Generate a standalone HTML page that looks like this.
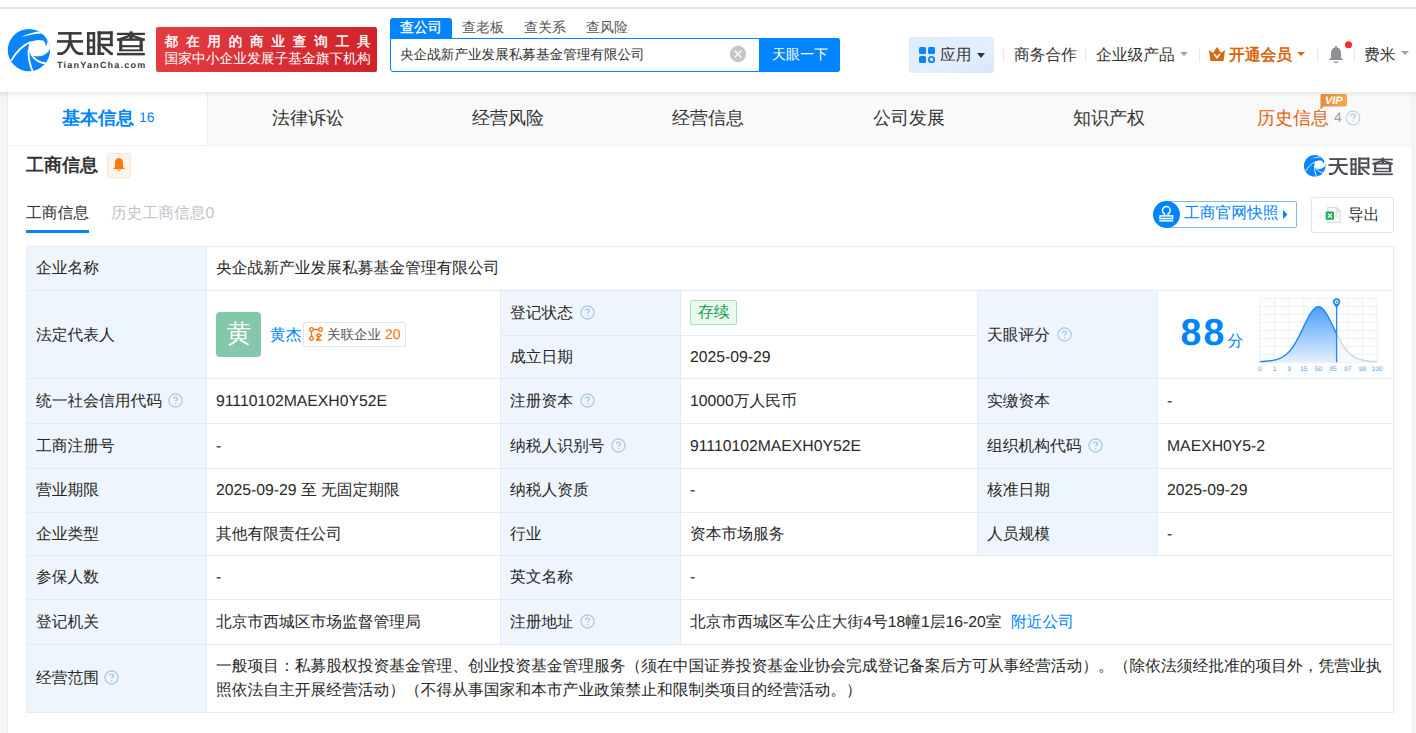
<!DOCTYPE html>
<html><head><meta charset="utf-8">
<style>
*{box-sizing:border-box;margin:0;padding:0}
html,body{width:1416px;height:733px;overflow:hidden;background:#f5f5f5;font-family:"Liberation Sans",sans-serif;color:#333;text-rendering:geometricPrecision}
.a{position:absolute;white-space:nowrap}
#hdr{position:absolute;left:0;top:0;width:1416px;height:92px;background:#fff}
#topline{position:absolute;left:0;top:7px;width:1416px;height:2px;background:#e2e2e2}
#hshadow{position:absolute;left:0;top:92px;width:1416px;height:6px;background:linear-gradient(rgba(0,0,0,0.07),rgba(0,0,0,0))}
#panel{position:absolute;left:7px;top:92px;width:1406px;height:700px;background:#fff;border-left:1px solid #ebebeb;border-right:1px solid #efefef}
.tb{top:92px;width:1px;height:53px;background:#efefef}
.c{font-size:15.75px;color:#282828;line-height:19px}
.tt{top:107px;font-size:18px;color:#333;line-height:22px}
</style></head>
<body>
<div id="hdr">
  <div id="topline"></div>
  <!-- logo circle -->
  <svg class="a" style="left:6px;top:27px" width="46" height="46" viewBox="0 0 733 733">
    <defs><clipPath id="lc"><circle cx="365" cy="368" r="337"/></clipPath></defs>
    <g clip-path="url(#lc)">
      <rect x="0" y="0" width="733" height="733" fill="#0a84ff"/>
      <path d="M380,245 C430,212 520,195 590,215 C625,240 635,280 630,312 C650,290 665,245 660,210 C650,160 610,125 552,100 L552,0 L760,0 L760,345 L700,345 C680,400 620,455 520,468 C480,470 445,465 420,455 C372,425 355,380 358,330 C360,295 368,265 380,245 Z" fill="#fff"/>
      <path d="M250,160 C320,138 430,110 560,102 L565,60 C430,85 320,118 250,154 Z" fill="#fff"/>
      <path d="M80,540 C150,420 260,290 398,238" stroke="#fff" stroke-width="29" fill="none"/>
      <path d="M362,360 C350,480 378,600 430,720" stroke="#fff" stroke-width="29" fill="none"/>
      <path d="M402,440 C460,530 540,575 640,582" stroke="#fff" stroke-width="29" fill="none"/>
    </g>
  </svg>
  <!-- logo text -->
  <svg class="a" style="left:52px;top:25px" width="100" height="50" viewBox="0 0 1416 708">
    <g fill="#3d3a3b">
      <!-- 天 -->
      <rect x="85" y="100" width="335" height="36"/>
      <rect x="70" y="214" width="370" height="37"/>
      <rect x="236" y="100" width="40" height="150"/>
      <path d="M250,245 C238,320 195,390 140,405 L75,405" stroke="#3d3a3b" stroke-width="40" fill="none"/>
      <path d="M262,245 C285,320 325,390 380,405 L440,405" stroke="#3d3a3b" stroke-width="40" fill="none"/>
      <!-- 眼 left -->
      <rect x="495" y="100" width="38" height="325"/>
      <rect x="575" y="100" width="36" height="325"/>
      <rect x="495" y="100" width="116" height="35"/>
      <rect x="495" y="203" width="116" height="32"/>
      <rect x="495" y="302" width="116" height="30"/>
      <rect x="495" y="390" width="116" height="35"/>
      <!-- 眼 right -->
      <rect x="645" y="90" width="45" height="335"/>
      <rect x="645" y="90" width="215" height="40"/>
      <rect x="820" y="90" width="40" height="210"/>
      <rect x="690" y="180" width="130" height="35"/>
      <rect x="645" y="265" width="215" height="35"/>
      <rect x="645" y="388" width="95" height="37"/>
      <path d="M715,300 L835,405 L862,408" stroke="#3d3a3b" stroke-width="38" fill="none"/>
      <!-- 查 -->
      <rect x="920" y="110" width="395" height="32"/>
      <rect x="1097" y="90" width="46" height="110"/>
      <path d="M1105,150 L935,212" stroke="#3d3a3b" stroke-width="34" fill="none"/>
      <path d="M1135,150 L1300,212" stroke="#3d3a3b" stroke-width="34" fill="none"/>
      <rect x="920" y="190" width="395" height="34"/>
      <rect x="952" y="215" width="43" height="155"/>
      <rect x="1240" y="215" width="45" height="155"/>
      <rect x="952" y="285" width="333" height="30"/>
      <rect x="952" y="345" width="333" height="27"/>
      <rect x="920" y="395" width="395" height="35"/>
    </g>
  </svg>
  <div class="a" style="left:57px;top:59.5px;font-size:9px;font-weight:bold;letter-spacing:1.22px;color:#3d3a3b;line-height:11px">TianYanCha.com</div>
  <!-- red banner -->
  <div class="a" style="left:156px;top:27px;width:221px;height:45px;border-radius:2px;background:linear-gradient(100deg,#e33d42,#d0222a)"></div>
  <div class="a" style="left:164.5px;top:33.5px;font-size:13.6px;color:#fff;letter-spacing:7.8px;-webkit-text-stroke:0.4px #fff;line-height:16px">都在用的商业查询工具</div>
  <div class="a" style="left:164.5px;top:51px;font-size:13.75px;color:#fff;line-height:16px">国家中小企业发展子基金旗下机构</div>
  <!-- search -->
  <div class="a" style="left:390px;top:18px;width:62px;height:21px;background:#0084ff;border-radius:3px 3px 0 0"></div>
  <div class="a" style="left:400px;top:19px;font-size:14px;color:#fff;line-height:17px;-webkit-text-stroke:0.3px #fff">查公司</div>
  <div class="a" style="left:462px;top:19px;font-size:14px;color:#555;line-height:17px">查老板</div>
  <div class="a" style="left:524px;top:19px;font-size:14px;color:#555;line-height:17px">查关系</div>
  <div class="a" style="left:586px;top:19px;font-size:14px;color:#555;line-height:17px">查风险</div>
  <div class="a" style="left:390px;top:38px;width:450px;height:34px;border:1px solid #0084ff;border-radius:0 3px 3px 3px;background:#fff"></div>
  <div class="a" style="left:400px;top:47px;font-size:13.6px;color:#333;line-height:16px">央企战新产业发展私募基金管理有限公司</div>
  <svg class="a" style="left:729px;top:45px" width="18" height="18" viewBox="0 0 18 18"><circle cx="9" cy="9" r="8.2" fill="#c4c6cc"/><path d="M5.8,5.8 L12.2,12.2 M12.2,5.8 L5.8,12.2" stroke="#fff" stroke-width="1.3"/></svg>
  <div class="a" style="left:759px;top:38px;width:81px;height:34px;background:#0084ff;border-radius:0 3px 3px 0"></div>
  <div class="a" style="left:772px;top:46px;font-size:14px;color:#fff;line-height:17px">天眼一下</div>
  <!-- right nav -->
  <div class="a" style="left:909px;top:37px;width:85px;height:36px;border-radius:3px;background:linear-gradient(160deg,#dcecfd,#e3effc 60%,#d6e6fa)"></div>
  <svg class="a" style="left:919px;top:47px" width="17" height="16" viewBox="0 0 17 16">
    <rect x="0" y="0" width="7" height="7" rx="1.5" fill="#0a84ff"/>
    <rect x="9" y="0" width="7" height="7" rx="1.5" fill="#0a84ff"/>
    <rect x="0" y="9" width="7" height="7" rx="1.5" fill="#0a84ff"/>
    <circle cx="12.5" cy="12.5" r="2.7" fill="none" stroke="#0a84ff" stroke-width="1.8"/>
  </svg>
  <div class="a" style="left:940px;top:46px;font-size:15.75px;color:#333;line-height:19px">应用</div>
  <svg class="a" style="left:977px;top:53px" width="8" height="5" viewBox="0 0 8 5"><path d="M0,0 L8,0 L4,5Z" fill="#333"/></svg>
  <div class="a" style="left:1003px;top:48px;width:1px;height:14px;background:#e6e9ee"></div>
  <div class="a" style="left:1014px;top:46px;font-size:15.75px;color:#333;line-height:19px">商务合作</div>
  <div class="a" style="left:1085px;top:48px;width:1px;height:14px;background:#e6e9ee"></div>
  <div class="a" style="left:1096px;top:46px;font-size:15.75px;color:#333;line-height:19px">企业级产品</div>
  <svg class="a" style="left:1180px;top:52px" width="8" height="4" viewBox="0 0 8 4"><path d="M0,0 L8,0 L4,4Z" fill="#a0a0a0"/></svg>
  <div class="a" style="left:1199px;top:48px;width:1px;height:14px;background:#e6e9ee"></div>
  <svg class="a" style="left:1209px;top:47px" width="16" height="14" viewBox="0 0 16 14">
    <path d="M0,3 L4,6 L8,0 L12,6 L16,3 L14.5,14 L1.5,14 Z" fill="#d9650c"/>
    <path d="M5,7 L8,10.5 L11,7" stroke="#fff" stroke-width="1.8" fill="none"/>
  </svg>
  <div class="a" style="left:1229px;top:46px;font-size:15.75px;font-weight:bold;color:#d9650c;line-height:19px">开通会员</div>
  <svg class="a" style="left:1297px;top:52px" width="8" height="4" viewBox="0 0 8 4"><path d="M0,0 L8,0 L4,4Z" fill="#d9650c"/></svg>
  <div class="a" style="left:1317px;top:48px;width:1px;height:14px;background:#e6e9ee"></div>
  <svg class="a" style="left:1328px;top:45px" width="16" height="19" viewBox="0 0 16 19">
    <rect x="7.3" y="0.8" width="1.4" height="2" fill="#8c8f95"/>
    <path d="M3,14 L3,8.5 C3,4.8 5,2.3 8,2.3 C11,2.3 13,4.8 13,8.5 L13,14 Z" fill="#8c8f95"/>
    <rect x="1.2" y="13.3" width="13.6" height="1.7" rx="0.8" fill="#8c8f95"/>
    <rect x="5.8" y="16.6" width="4.4" height="1.3" fill="#8c8f95"/>
  </svg>
  <svg class="a" style="left:1344px;top:41px" width="8" height="8" viewBox="0 0 8 8"><circle cx="4.5" cy="3.7" r="3.5" fill="#f72a2a"/></svg>
  <div class="a" style="left:1354px;top:48px;width:1px;height:14px;background:#e6e9ee"></div>
  <div class="a" style="left:1364px;top:46px;font-size:15.75px;color:#333;line-height:19px">费米</div>
  <svg class="a" style="left:1401px;top:51px" width="8" height="4" viewBox="0 0 8 4"><path d="M0,0 L8,0 L4,4Z" fill="#a0a0a0"/></svg>
</div>
<div id="panel"></div>
<!-- tab bar -->
<div class="a" style="left:8px;top:92px;width:1404px;height:53px;background:#f9f9f9"></div>
<div class="a" style="left:8px;top:92px;width:199px;height:53px;background:#fff"></div>
<div class="a tb" style="left:207px"></div>
<div class="a" style="left:8px;top:145px;width:1404px;height:1px;background:#f2f2f2"></div>
<div class="a" style="left:62px;top:107px;font-size:18px;font-weight:bold;color:#0084ff;line-height:22px">基本信息</div>
<div class="a" style="left:139px;top:108px;font-size:14px;color:#0084ff;line-height:18px">16</div>
<div class="a tt" style="left:272px">法律诉讼</div>
<div class="a tt" style="left:472px">经营风险</div>
<div class="a tt" style="left:672px">经营信息</div>
<div class="a tt" style="left:873px">公司发展</div>
<div class="a tt" style="left:1073px">知识产权</div>
<div class="a tt" style="left:1257px;color:#de630d">历史信息</div>
<div class="a" style="left:1334px;top:108px;font-size:14px;color:#999;line-height:18px">4</div>
<svg class="a" style="left:1345px;top:110px" width="16" height="16" viewBox="0 0 16 16"><circle cx="8" cy="8" r="6.8" fill="none" stroke="#c5d1de" stroke-width="1.2"/><path d="M5.9,6.2 C5.9,4.9 6.9,4.2 8,4.2 C9.2,4.2 10.1,5 10.1,6.1 C10.1,7.4 8.2,7.6 8.2,9.1" fill="none" stroke="#b8c4d2" stroke-width="1.2"/><circle cx="8.2" cy="11.3" r="0.8" fill="#b8c4d2"/></svg>
<svg class="a" style="left:1320px;top:93px" width="28" height="17" viewBox="0 0 28 17">
  <defs><linearGradient id="vg" x1="0" x2="1"><stop offset="0" stop-color="#e68a34"/><stop offset="1" stop-color="#f2ab4e"/></linearGradient></defs>
  <path d="M2,1 L25,1 Q27,1 27,3 L27,11.5 Q27,13.5 25,13.5 L4,13.5 L0.5,16.5 L0.5,3 Q0.5,1 2,1Z" fill="url(#vg)"/>
  <text x="13.8" y="11.2" font-family="Liberation Sans" font-weight="bold" font-style="italic" font-size="11" fill="#fff" text-anchor="middle">VIP</text>
</svg>

<!-- section title -->
<div class="a" style="left:26px;top:154px;font-size:18px;font-weight:bold;color:#333;line-height:22px">工商信息</div>
<div class="a" style="left:107px;top:153px;width:24px;height:25px;border:1px solid #fde4d2;background:#fff4ec;border-radius:3px"></div>
<svg class="a" style="left:112px;top:157px" width="14" height="15" viewBox="0 0 14 15">
  <path d="M7,1 C4.2,1 3,3.2 3,6 L3,10 L1,12 L13,12 L11,10 L11,6 C11,3.2 9.8,1 7,1Z" fill="#ff7a00"/>
  <path d="M5,12.5 C5.3,14 8.7,14 9,12.5Z" fill="#ff7a00"/>
</svg>
<svg class="a" style="left:1303px;top:154px" width="23.5" height="23.5" viewBox="0 0 733 733">
    <defs><clipPath id="lc2"><circle cx="365" cy="368" r="337"/></clipPath></defs>
    <g clip-path="url(#lc2)">
      <rect x="0" y="0" width="733" height="733" fill="#0a84ff"/>
      <path d="M380,245 C430,212 520,195 590,215 C625,240 635,280 630,312 C650,290 665,245 660,210 C650,160 610,125 552,100 L552,0 L760,0 L760,345 L700,345 C680,400 620,455 520,468 C480,470 445,465 420,455 C372,425 355,380 358,330 C360,295 368,265 380,245 Z" fill="#fff"/>
      <path d="M250,160 C320,138 430,110 560,102 L565,60 C430,85 320,118 250,154 Z" fill="#fff"/>
      <path d="M80,540 C150,420 260,290 398,238" stroke="#fff" stroke-width="29" fill="none"/>
      <path d="M362,360 C350,480 378,600 430,720" stroke="#fff" stroke-width="29" fill="none"/>
      <path d="M402,440 C460,530 540,575 640,582" stroke="#fff" stroke-width="29" fill="none"/>
    </g>
  </svg>
<svg class="a" style="left:1325px;top:152.5px" width="73" height="36.5" viewBox="0 0 1416 708">
    <g fill="#4a4d55">
      <!-- 天 -->
      <rect x="85" y="100" width="335" height="36"/>
      <rect x="70" y="214" width="370" height="37"/>
      <rect x="236" y="100" width="40" height="150"/>
      <path d="M250,245 C238,320 195,390 140,405 L75,405" stroke="#4a4d55" stroke-width="40" fill="none"/>
      <path d="M262,245 C285,320 325,390 380,405 L440,405" stroke="#4a4d55" stroke-width="40" fill="none"/>
      <!-- 眼 left -->
      <rect x="495" y="100" width="38" height="325"/>
      <rect x="575" y="100" width="36" height="325"/>
      <rect x="495" y="100" width="116" height="35"/>
      <rect x="495" y="203" width="116" height="32"/>
      <rect x="495" y="302" width="116" height="30"/>
      <rect x="495" y="390" width="116" height="35"/>
      <!-- 眼 right -->
      <rect x="645" y="90" width="45" height="335"/>
      <rect x="645" y="90" width="215" height="40"/>
      <rect x="820" y="90" width="40" height="210"/>
      <rect x="690" y="180" width="130" height="35"/>
      <rect x="645" y="265" width="215" height="35"/>
      <rect x="645" y="388" width="95" height="37"/>
      <path d="M715,300 L835,405 L862,408" stroke="#4a4d55" stroke-width="38" fill="none"/>
      <!-- 查 -->
      <rect x="920" y="110" width="395" height="32"/>
      <rect x="1097" y="90" width="46" height="110"/>
      <path d="M1105,150 L935,212" stroke="#4a4d55" stroke-width="34" fill="none"/>
      <path d="M1135,150 L1300,212" stroke="#4a4d55" stroke-width="34" fill="none"/>
      <rect x="920" y="190" width="395" height="34"/>
      <rect x="952" y="215" width="43" height="155"/>
      <rect x="1240" y="215" width="45" height="155"/>
      <rect x="952" y="285" width="333" height="30"/>
      <rect x="952" y="345" width="333" height="27"/>
      <rect x="920" y="395" width="395" height="35"/>
    </g>
  </svg>

<!-- subtabs -->
<div class="a" style="left:26px;top:204px;font-size:15.75px;color:#333;line-height:19px">工商信息</div>
<div class="a" style="left:26px;top:230px;width:63px;height:3px;background:#0084ff"></div>
<div class="a" style="left:111px;top:204px;font-size:15.75px;color:#c0c4cc;line-height:19px">历史工商信息0</div>

<!-- buttons -->
<div class="a" style="left:1166px;top:201px;width:131px;height:27px;border:1px solid #7db9f7;border-radius:2px;background:#fff"></div>
<svg class="a" style="left:1153px;top:201px" width="27" height="27" viewBox="0 0 27 27">
  <circle cx="13.5" cy="13.5" r="13.5" fill="#0084ff"/>
  <path d="M11.6,14.6 L11.6,13 C10.1,12.3 9.4,11 9.4,9.6 C9.4,7.3 11.2,5.6 13.3,5.6 C15.4,5.6 17.2,7.3 17.2,9.6 C17.2,11 16.5,12.3 15,13 L15,14.6" fill="none" stroke="#fff" stroke-width="1.5"/>
  <rect x="7" y="14.9" width="12.6" height="2.6" fill="none" stroke="#fff" stroke-width="1.5"/>
  <rect x="6.3" y="18.8" width="13.9" height="1.9" fill="#dcecff"/>
</svg>
<div class="a" style="left:1184px;top:204px;font-size:15.75px;color:#0084ff;line-height:19px">工商官网快照</div>
<svg class="a" style="left:1283px;top:210px" width="5" height="9" viewBox="0 0 5 9"><path d="M0,0 L4.5,4.5 L0,9Z" fill="#0084ff"/></svg>

<div class="a" style="left:1311px;top:197px;width:83px;height:36px;border:1px solid #dfe3ea;border-radius:3px;background:#fff"></div>
<svg class="a" style="left:1325px;top:206px" width="16" height="18" viewBox="0 0 16 18">
  <path d="M2.8,1.5 L11.2,1.5 L15.2,5.5 L15.2,16.2 L2.8,16.2 Z" fill="#fff" stroke="#d3d6dc" stroke-width="1.1"/>
  <path d="M11.2,1.5 L11.2,5.5 L15.2,5.5" fill="none" stroke="#d3d6dc" stroke-width="1.1"/>
  <rect x="10.3" y="6.6" width="3" height="0.9" fill="#d0d3d9"/><rect x="10.3" y="8.6" width="3" height="0.9" fill="#d0d3d9"/><rect x="10.3" y="10.4" width="3" height="0.9" fill="#d0d3d9"/>
  <rect x="0.7" y="5.6" width="8.3" height="8.1" rx="1" fill="#1fac5b"/>
  <path d="M2.8,7.6 L6.9,11.7 M6.9,7.6 L2.8,11.7" stroke="#fff" stroke-width="1.3"/>
</svg>
<div class="a" style="left:1348px;top:206px;font-size:15.75px;color:#333;line-height:19px">导出</div>

<!-- TABLE -->
<div class="a" style="left:26px;top:246px;width:1368px;height:467px;background:#fff"></div>
<div class="a" style="left:26px;top:246px;width:180px;height:466px;background:#eef5fd"></div>
<div class="a" style="left:500px;top:290px;width:180px;height:354px;background:#eef5fd"></div>
<div class="a" style="left:977px;top:290px;width:180px;height:265px;background:#eef5fd"></div>
<div class="a" style="left:26px;top:246px;width:1368px;height:1px;background:#e2ebf6"></div>
<div class="a" style="left:26px;top:290px;width:1368px;height:1px;background:#e2ebf6"></div>
<div class="a" style="left:26px;top:378px;width:1368px;height:1px;background:#e2ebf6"></div>
<div class="a" style="left:26px;top:423px;width:1368px;height:1px;background:#e2ebf6"></div>
<div class="a" style="left:26px;top:468px;width:1368px;height:1px;background:#e2ebf6"></div>
<div class="a" style="left:26px;top:512px;width:1368px;height:1px;background:#e2ebf6"></div>
<div class="a" style="left:26px;top:555px;width:1368px;height:1px;background:#e2ebf6"></div>
<div class="a" style="left:26px;top:599px;width:1368px;height:1px;background:#e2ebf6"></div>
<div class="a" style="left:26px;top:644px;width:1368px;height:1px;background:#e2ebf6"></div>
<div class="a" style="left:26px;top:712px;width:1368px;height:1px;background:#e2ebf6"></div>
<div class="a" style="left:500px;top:335px;width:477px;height:1px;background:#e2ebf6"></div>
<div class="a" style="left:26px;top:246px;width:1px;height:467px;background:#e2ebf6"></div>
<div class="a" style="left:206px;top:246px;width:1px;height:467px;background:#e2ebf6"></div>
<div class="a" style="left:1393px;top:246px;width:1px;height:467px;background:#e2ebf6"></div>
<div class="a" style="left:500px;top:290px;width:1px;height:354px;background:#e2ebf6"></div>
<div class="a" style="left:680px;top:290px;width:1px;height:354px;background:#e2ebf6"></div>
<div class="a" style="left:977px;top:290px;width:1px;height:265px;background:#e2ebf6"></div>
<div class="a" style="left:1157px;top:290px;width:1px;height:265px;background:#e2ebf6"></div>
<!-- row texts -->
<div class="a c" style="left:36px;top:259px">企业名称</div>
<div class="a c" style="left:216px;top:259px">央企战新产业发展私募基金管理有限公司</div>

<div class="a c" style="left:36px;top:326px">法定代表人</div>
<div class="a" style="left:216px;top:312px;width:45px;height:45px;border-radius:4px;background:#84c7aa"></div>
<div class="a" style="left:226.5px;top:320px;font-size:25px;color:#fff;line-height:28px">黄</div>
<div class="a c" style="left:270px;top:326px;color:#0084ff">黄杰</div>
<div class="a" style="left:303px;top:322px;width:103px;height:25px;border:1px solid #dde3ee;border-radius:2px;background:#fff"></div>
<svg class="a" style="left:309px;top:327px" width="15" height="14" viewBox="0 0 15 14">
  <g fill="none" stroke="#ff6a00" stroke-width="1.3">
    <circle cx="2.5" cy="2.5" r="1.8"/><circle cx="11.5" cy="2.5" r="1.8"/><circle cx="2.5" cy="11.5" r="1.8"/>
    <path d="M4.3,2.5 L9.7,2.5 M2.5,4.3 L2.5,9.7"/>
    <path d="M7,9 L9.8,6.5 L12.6,9 M8,9.5 L11.6,9.5 M9.8,9.5 L9.8,13 M8.2,11 L8.2,13 M7,13.2 L12.8,13.2"/>
  </g>
</svg>
<div class="a" style="left:327px;top:326px;font-size:13.5px;color:#555;line-height:17px">关联企业</div>
<div class="a" style="left:385px;top:326px;font-size:14px;color:#ff6a00;line-height:17px">20</div>

<div class="a c" style="left:510px;top:304px">登记状态</div>
<svg class="a" style="left:580px;top:305px" width="15" height="15" viewBox="0 0 15 15"><circle cx="7.5" cy="7.5" r="6.6" fill="none" stroke="#a9c6e8" stroke-width="1.25"/><path d="M5.6,5.9 C5.6,4.7 6.5,4 7.5,4 C8.6,4 9.4,4.7 9.4,5.7 C9.4,7 7.7,7.1 7.7,8.6" fill="none" stroke="#a3bfe2" stroke-width="1.2"/><circle cx="7.7" cy="10.7" r="0.75" fill="#a3bfe2"/></svg>
<div class="a" style="left:690px;top:300px;width:47px;height:25px;border:1px solid #a4e2bd;border-radius:2px;background:#e9f9ef"></div>
<div class="a" style="left:698px;top:303px;font-size:15.75px;color:#1aa055;line-height:19px">存续</div>
<div class="a c" style="left:510px;top:348px">成立日期</div>
<div class="a c" style="left:690px;top:348px">2025-09-29</div>

<div class="a c" style="left:987px;top:326px">天眼评分</div>
<svg class="a" style="left:1057px;top:327px" width="15" height="15" viewBox="0 0 15 15"><circle cx="7.5" cy="7.5" r="6.6" fill="none" stroke="#a9c6e8" stroke-width="1.25"/><path d="M5.6,5.9 C5.6,4.7 6.5,4 7.5,4 C8.6,4 9.4,4.7 9.4,5.7 C9.4,7 7.7,7.1 7.7,8.6" fill="none" stroke="#a3bfe2" stroke-width="1.2"/><circle cx="7.7" cy="10.7" r="0.75" fill="#a3bfe2"/></svg>
<div class="a" style="left:1180.5px;top:310px;font-size:37.5px;font-weight:bold;color:#0084ff;line-height:44px;letter-spacing:2.2px">88</div>
<div class="a" style="left:1227.5px;top:332px;font-size:15.75px;color:#0084ff;line-height:19px">分</div>
<svg class="a" style="left:1250px;top:290px" width="140" height="90" viewBox="0 0 140 90">
<defs><linearGradient id="cg" x1="0" y1="0" x2="0" y2="1"><stop offset="0" stop-color="#4c9ffb"/><stop offset="1" stop-color="#e4f0fd"/></linearGradient></defs>
<path d="M9.90,8.40 L9.90,72.30 M9.90,8.40 L127.00,8.40 M24.54,8.40 L24.54,72.30 M9.90,16.39 L127.00,16.39 M39.18,8.40 L39.18,72.30 M9.90,24.38 L127.00,24.38 M53.81,8.40 L53.81,72.30 M9.90,32.36 L127.00,32.36 M68.45,8.40 L68.45,72.30 M9.90,40.35 L127.00,40.35 M83.09,8.40 L83.09,72.30 M9.90,48.34 L127.00,48.34 M97.72,8.40 L97.72,72.30 M9.90,56.32 L127.00,56.32 M112.36,8.40 L112.36,72.30 M9.90,64.31 L127.00,64.31 M127.00,8.40 L127.00,72.30 M9.90,72.30 L127.00,72.30" stroke="#eaf1f9" stroke-width="1" fill="none"/>
<path d="M9.90,71.65 L10.75,71.60 L11.60,71.55 L12.46,71.50 L13.31,71.44 L14.16,71.38 L15.01,71.31 L15.87,71.24 L16.72,71.16 L17.57,71.07 L18.42,70.98 L19.27,70.87 L20.13,70.76 L20.98,70.64 L21.83,70.50 L22.68,70.36 L23.54,70.19 L24.39,70.01 L25.24,69.81 L26.09,69.59 L26.94,69.35 L27.80,69.08 L28.65,68.78 L29.50,68.45 L30.35,68.09 L31.21,67.69 L32.06,67.26 L32.91,66.77 L33.76,66.25 L34.61,65.67 L35.47,65.04 L36.32,64.35 L37.17,63.60 L38.02,62.79 L38.88,61.92 L39.73,60.98 L40.58,59.97 L41.43,58.89 L42.28,57.73 L43.14,56.51 L43.99,55.22 L44.84,53.85 L45.69,52.42 L46.55,50.93 L47.40,49.37 L48.25,47.75 L49.10,46.09 L49.95,44.38 L50.81,42.64 L51.66,40.86 L52.51,39.07 L53.36,37.27 L54.22,35.48 L55.07,33.69 L55.92,31.94 L56.77,30.22 L57.62,28.56 L58.48,26.96 L59.33,25.43 L60.18,24.00 L61.03,22.66 L61.89,21.44 L62.74,20.35 L63.59,19.38 L64.44,18.56 L65.29,17.89 L66.15,17.38 L67.00,17.02 L67.85,16.83 L68.70,16.81 L69.56,16.95 L70.41,17.26 L71.26,17.73 L72.11,18.36 L72.96,19.13 L73.82,20.06 L74.67,21.11 L75.52,22.30 L76.37,23.60 L77.23,25.01 L78.08,26.51 L78.93,28.09 L79.78,29.74 L80.63,31.44 L81.49,33.19 L82.34,34.96 L83.19,36.75 L84.04,38.55 L84.90,40.35 L85.75,42.13 L86.60,43.88 L86.60,72.30 L9.90,72.30 Z" fill="url(#cg)"/>
<path d="M9.90,71.65 L10.75,71.60 L11.60,71.55 L12.46,71.50 L13.31,71.44 L14.16,71.38 L15.01,71.31 L15.87,71.24 L16.72,71.16 L17.57,71.07 L18.42,70.98 L19.27,70.87 L20.13,70.76 L20.98,70.64 L21.83,70.50 L22.68,70.36 L23.54,70.19 L24.39,70.01 L25.24,69.81 L26.09,69.59 L26.94,69.35 L27.80,69.08 L28.65,68.78 L29.50,68.45 L30.35,68.09 L31.21,67.69 L32.06,67.26 L32.91,66.77 L33.76,66.25 L34.61,65.67 L35.47,65.04 L36.32,64.35 L37.17,63.60 L38.02,62.79 L38.88,61.92 L39.73,60.98 L40.58,59.97 L41.43,58.89 L42.28,57.73 L43.14,56.51 L43.99,55.22 L44.84,53.85 L45.69,52.42 L46.55,50.93 L47.40,49.37 L48.25,47.75 L49.10,46.09 L49.95,44.38 L50.81,42.64 L51.66,40.86 L52.51,39.07 L53.36,37.27 L54.22,35.48 L55.07,33.69 L55.92,31.94 L56.77,30.22 L57.62,28.56 L58.48,26.96 L59.33,25.43 L60.18,24.00 L61.03,22.66 L61.89,21.44 L62.74,20.35 L63.59,19.38 L64.44,18.56 L65.29,17.89 L66.15,17.38 L67.00,17.02 L67.85,16.83 L68.70,16.81 L69.56,16.95 L70.41,17.26 L71.26,17.73 L72.11,18.36 L72.96,19.13 L73.82,20.06 L74.67,21.11 L75.52,22.30 L76.37,23.60 L77.23,25.01 L78.08,26.51 L78.93,28.09 L79.78,29.74 L80.63,31.44 L81.49,33.19 L82.34,34.96 L83.19,36.75 L84.04,38.55 L84.90,40.35 L85.75,42.13 L86.60,43.88" stroke="#1a87fb" stroke-width="1.4" fill="none"/>
<path d="M86.60,43.88 L87.05,44.79 L87.50,45.69 L87.95,46.58 L88.40,47.46 L88.84,48.32 L89.29,49.16 L89.74,50.00 L90.19,50.81 L90.64,51.61 L91.09,52.39 L91.54,53.15 L91.99,53.90 L92.44,54.63 L92.88,55.33 L93.33,56.02 L93.78,56.69 L94.23,57.33 L94.68,57.96 L95.13,58.57 L95.58,59.16 L96.03,59.73 L96.48,60.28 L96.92,60.81 L97.37,61.32 L97.82,61.81 L98.27,62.28 L98.72,62.74 L99.17,63.17 L99.62,63.59 L100.07,63.99 L100.52,64.38 L100.96,64.75 L101.41,65.10 L101.86,65.43 L102.31,65.76 L102.76,66.06 L103.21,66.36 L103.66,66.63 L104.11,66.90 L104.56,67.15 L105.00,67.40 L105.45,67.62 L105.90,67.84 L106.35,68.05 L106.80,68.25 L107.25,68.43 L107.70,68.61 L108.15,68.78 L108.60,68.94 L109.04,69.09 L109.49,69.24 L109.94,69.37 L110.39,69.50 L110.84,69.63 L111.29,69.74 L111.74,69.86 L112.19,69.96 L112.64,70.06 L113.08,70.16 L113.53,70.25 L113.98,70.33 L114.43,70.41 L114.88,70.49 L115.33,70.56 L115.78,70.63 L116.23,70.70 L116.68,70.76 L117.12,70.82 L117.57,70.88 L118.02,70.94 L118.47,70.99 L118.92,71.04 L119.37,71.09 L119.82,71.13 L120.27,71.18 L120.72,71.22 L121.16,71.26 L121.61,71.30 L122.06,71.33 L122.51,71.37 L122.96,71.40 L123.41,71.43 L123.86,71.47 L124.31,71.50 L124.76,71.52 L125.20,71.55 L125.65,71.58 L126.10,71.61 L126.55,71.63 L127.00,71.65 L127.00,72.30 L86.60,72.30 Z" fill="#f6f8fb"/>
<path d="M86.60,43.88 L87.05,44.79 L87.50,45.69 L87.95,46.58 L88.40,47.46 L88.84,48.32 L89.29,49.16 L89.74,50.00 L90.19,50.81 L90.64,51.61 L91.09,52.39 L91.54,53.15 L91.99,53.90 L92.44,54.63 L92.88,55.33 L93.33,56.02 L93.78,56.69 L94.23,57.33 L94.68,57.96 L95.13,58.57 L95.58,59.16 L96.03,59.73 L96.48,60.28 L96.92,60.81 L97.37,61.32 L97.82,61.81 L98.27,62.28 L98.72,62.74 L99.17,63.17 L99.62,63.59 L100.07,63.99 L100.52,64.38 L100.96,64.75 L101.41,65.10 L101.86,65.43 L102.31,65.76 L102.76,66.06 L103.21,66.36 L103.66,66.63 L104.11,66.90 L104.56,67.15 L105.00,67.40 L105.45,67.62 L105.90,67.84 L106.35,68.05 L106.80,68.25 L107.25,68.43 L107.70,68.61 L108.15,68.78 L108.60,68.94 L109.04,69.09 L109.49,69.24 L109.94,69.37 L110.39,69.50 L110.84,69.63 L111.29,69.74 L111.74,69.86 L112.19,69.96 L112.64,70.06 L113.08,70.16 L113.53,70.25 L113.98,70.33 L114.43,70.41 L114.88,70.49 L115.33,70.56 L115.78,70.63 L116.23,70.70 L116.68,70.76 L117.12,70.82 L117.57,70.88 L118.02,70.94 L118.47,70.99 L118.92,71.04 L119.37,71.09 L119.82,71.13 L120.27,71.18 L120.72,71.22 L121.16,71.26 L121.61,71.30 L122.06,71.33 L122.51,71.37 L122.96,71.40 L123.41,71.43 L123.86,71.47 L124.31,71.50 L124.76,71.52 L125.20,71.55 L125.65,71.58 L126.10,71.61 L126.55,71.63 L127.00,71.65" stroke="#c7d1dd" stroke-width="1.2" fill="none"/>
<path d="M86.60,16.00 L86.60,72.30" stroke="#1a87fb" stroke-width="1.3"/>
<path d="M83.00,11.90 A3.6,3.6 0 1 1 90.20,11.90 C90.20,14.10 87.60,16.40 86.60,18.00 C85.60,16.40 83.00,14.10 83.00,11.90 Z" fill="#1a87fb"/>
<circle cx="86.60" cy="11.90" r="1.9" fill="#fff"/><circle cx="86.60" cy="11.90" r="0.95" fill="#1a87fb"/>
<text x="9.90" y="81.20" font-family="Liberation Sans" font-size="6.5" fill="#4d9cf2" text-anchor="middle">0</text>
<text x="24.54" y="81.20" font-family="Liberation Sans" font-size="6.5" fill="#4d9cf2" text-anchor="middle">1</text>
<text x="39.18" y="81.20" font-family="Liberation Sans" font-size="6.5" fill="#4d9cf2" text-anchor="middle">3</text>
<text x="53.81" y="81.20" font-family="Liberation Sans" font-size="6.5" fill="#4d9cf2" text-anchor="middle">15</text>
<text x="68.45" y="81.20" font-family="Liberation Sans" font-size="6.5" fill="#4d9cf2" text-anchor="middle">50</text>
<text x="83.09" y="81.20" font-family="Liberation Sans" font-size="6.5" fill="#4d9cf2" text-anchor="middle">85</text>
<text x="97.72" y="81.20" font-family="Liberation Sans" font-size="6.5" fill="#4d9cf2" text-anchor="middle">97</text>
<text x="112.36" y="81.20" font-family="Liberation Sans" font-size="6.5" fill="#4d9cf2" text-anchor="middle">99</text>
<text x="127.00" y="81.20" font-family="Liberation Sans" font-size="6.5" fill="#4d9cf2" text-anchor="middle">100</text>
</svg>

<div class="a c" style="left:36px;top:392px">统一社会信用代码</div>
<svg class="a" style="left:168px;top:393px" width="15" height="15" viewBox="0 0 15 15"><circle cx="7.5" cy="7.5" r="6.6" fill="none" stroke="#a9c6e8" stroke-width="1.25"/><path d="M5.6,5.9 C5.6,4.7 6.5,4 7.5,4 C8.6,4 9.4,4.7 9.4,5.7 C9.4,7 7.7,7.1 7.7,8.6" fill="none" stroke="#a3bfe2" stroke-width="1.2"/><circle cx="7.7" cy="10.7" r="0.75" fill="#a3bfe2"/></svg>
<div class="a c" style="left:216px;top:392px">91110102MAEXH0Y52E</div>
<div class="a c" style="left:510px;top:392px">注册资本</div>
<svg class="a" style="left:580px;top:393px" width="15" height="15" viewBox="0 0 15 15"><circle cx="7.5" cy="7.5" r="6.6" fill="none" stroke="#a9c6e8" stroke-width="1.25"/><path d="M5.6,5.9 C5.6,4.7 6.5,4 7.5,4 C8.6,4 9.4,4.7 9.4,5.7 C9.4,7 7.7,7.1 7.7,8.6" fill="none" stroke="#a3bfe2" stroke-width="1.2"/><circle cx="7.7" cy="10.7" r="0.75" fill="#a3bfe2"/></svg>
<div class="a c" style="left:690px;top:392px">10000万人民币</div>
<div class="a c" style="left:987px;top:392px">实缴资本</div>
<div class="a c" style="left:1167px;top:392px">-</div>

<div class="a c" style="left:36px;top:437px">工商注册号</div>
<div class="a c" style="left:216px;top:437px">-</div>
<div class="a c" style="left:510px;top:437px">纳税人识别号</div>
<svg class="a" style="left:611px;top:438px" width="15" height="15" viewBox="0 0 15 15"><circle cx="7.5" cy="7.5" r="6.6" fill="none" stroke="#a9c6e8" stroke-width="1.25"/><path d="M5.6,5.9 C5.6,4.7 6.5,4 7.5,4 C8.6,4 9.4,4.7 9.4,5.7 C9.4,7 7.7,7.1 7.7,8.6" fill="none" stroke="#a3bfe2" stroke-width="1.2"/><circle cx="7.7" cy="10.7" r="0.75" fill="#a3bfe2"/></svg>
<div class="a c" style="left:690px;top:437px">91110102MAEXH0Y52E</div>
<div class="a c" style="left:987px;top:437px">组织机构代码</div>
<svg class="a" style="left:1088px;top:438px" width="15" height="15" viewBox="0 0 15 15"><circle cx="7.5" cy="7.5" r="6.6" fill="none" stroke="#a9c6e8" stroke-width="1.25"/><path d="M5.6,5.9 C5.6,4.7 6.5,4 7.5,4 C8.6,4 9.4,4.7 9.4,5.7 C9.4,7 7.7,7.1 7.7,8.6" fill="none" stroke="#a3bfe2" stroke-width="1.2"/><circle cx="7.7" cy="10.7" r="0.75" fill="#a3bfe2"/></svg>
<div class="a c" style="left:1167px;top:437px">MAEXH0Y5-2</div>

<div class="a c" style="left:36px;top:481px">营业期限</div>
<div class="a c" style="left:216px;top:481px">2025-09-29 至 无固定期限</div>
<div class="a c" style="left:510px;top:481px">纳税人资质</div>
<div class="a c" style="left:690px;top:481px">-</div>
<div class="a c" style="left:987px;top:481px">核准日期</div>
<div class="a c" style="left:1167px;top:481px">2025-09-29</div>

<div class="a c" style="left:36px;top:525px">企业类型</div>
<div class="a c" style="left:216px;top:525px">其他有限责任公司</div>
<div class="a c" style="left:510px;top:525px">行业</div>
<div class="a c" style="left:690px;top:525px">资本市场服务</div>
<div class="a c" style="left:987px;top:525px">人员规模</div>
<div class="a c" style="left:1167px;top:525px">-</div>

<div class="a c" style="left:36px;top:568px">参保人数</div>
<div class="a c" style="left:216px;top:568px">-</div>
<div class="a c" style="left:510px;top:568px">英文名称</div>
<div class="a c" style="left:690px;top:568px">-</div>

<div class="a c" style="left:36px;top:613px">登记机关</div>
<div class="a c" style="left:216px;top:613px">北京市西城区市场监督管理局</div>
<div class="a c" style="left:510px;top:613px">注册地址</div>
<svg class="a" style="left:580px;top:614px" width="15" height="15" viewBox="0 0 15 15"><circle cx="7.5" cy="7.5" r="6.6" fill="none" stroke="#a9c6e8" stroke-width="1.25"/><path d="M5.6,5.9 C5.6,4.7 6.5,4 7.5,4 C8.6,4 9.4,4.7 9.4,5.7 C9.4,7 7.7,7.1 7.7,8.6" fill="none" stroke="#a3bfe2" stroke-width="1.2"/><circle cx="7.7" cy="10.7" r="0.75" fill="#a3bfe2"/></svg>
<div class="a c" style="left:690px;top:613px">北京市西城区车公庄大街4号18幢1层16-20室</div>
<div class="a c" style="left:1011px;top:613px;color:#0084ff">附近公司</div>

<div class="a c" style="left:36px;top:669px">经营范围</div>
<svg class="a" style="left:104px;top:670px" width="15" height="15" viewBox="0 0 15 15"><circle cx="7.5" cy="7.5" r="6.6" fill="none" stroke="#a9c6e8" stroke-width="1.25"/><path d="M5.6,5.9 C5.6,4.7 6.5,4 7.5,4 C8.6,4 9.4,4.7 9.4,5.7 C9.4,7 7.7,7.1 7.7,8.6" fill="none" stroke="#a3bfe2" stroke-width="1.2"/><circle cx="7.7" cy="10.7" r="0.75" fill="#a3bfe2"/></svg>
<div class="a c" style="left:216px;top:655px;line-height:23.5px">一般项目：私募股权投资基金管理、创业投资基金管理服务（须在中国证券投资基金业协会完成登记备案后方可从事经营活动）。（除依法须经批准的项目外，凭营业执<br>照依法自主开展经营活动）（不得从事国家和本市产业政策禁止和限制类项目的经营活动。）</div>

<!-- /TABLE -->
<div id="hshadow"></div>
</body></html>
